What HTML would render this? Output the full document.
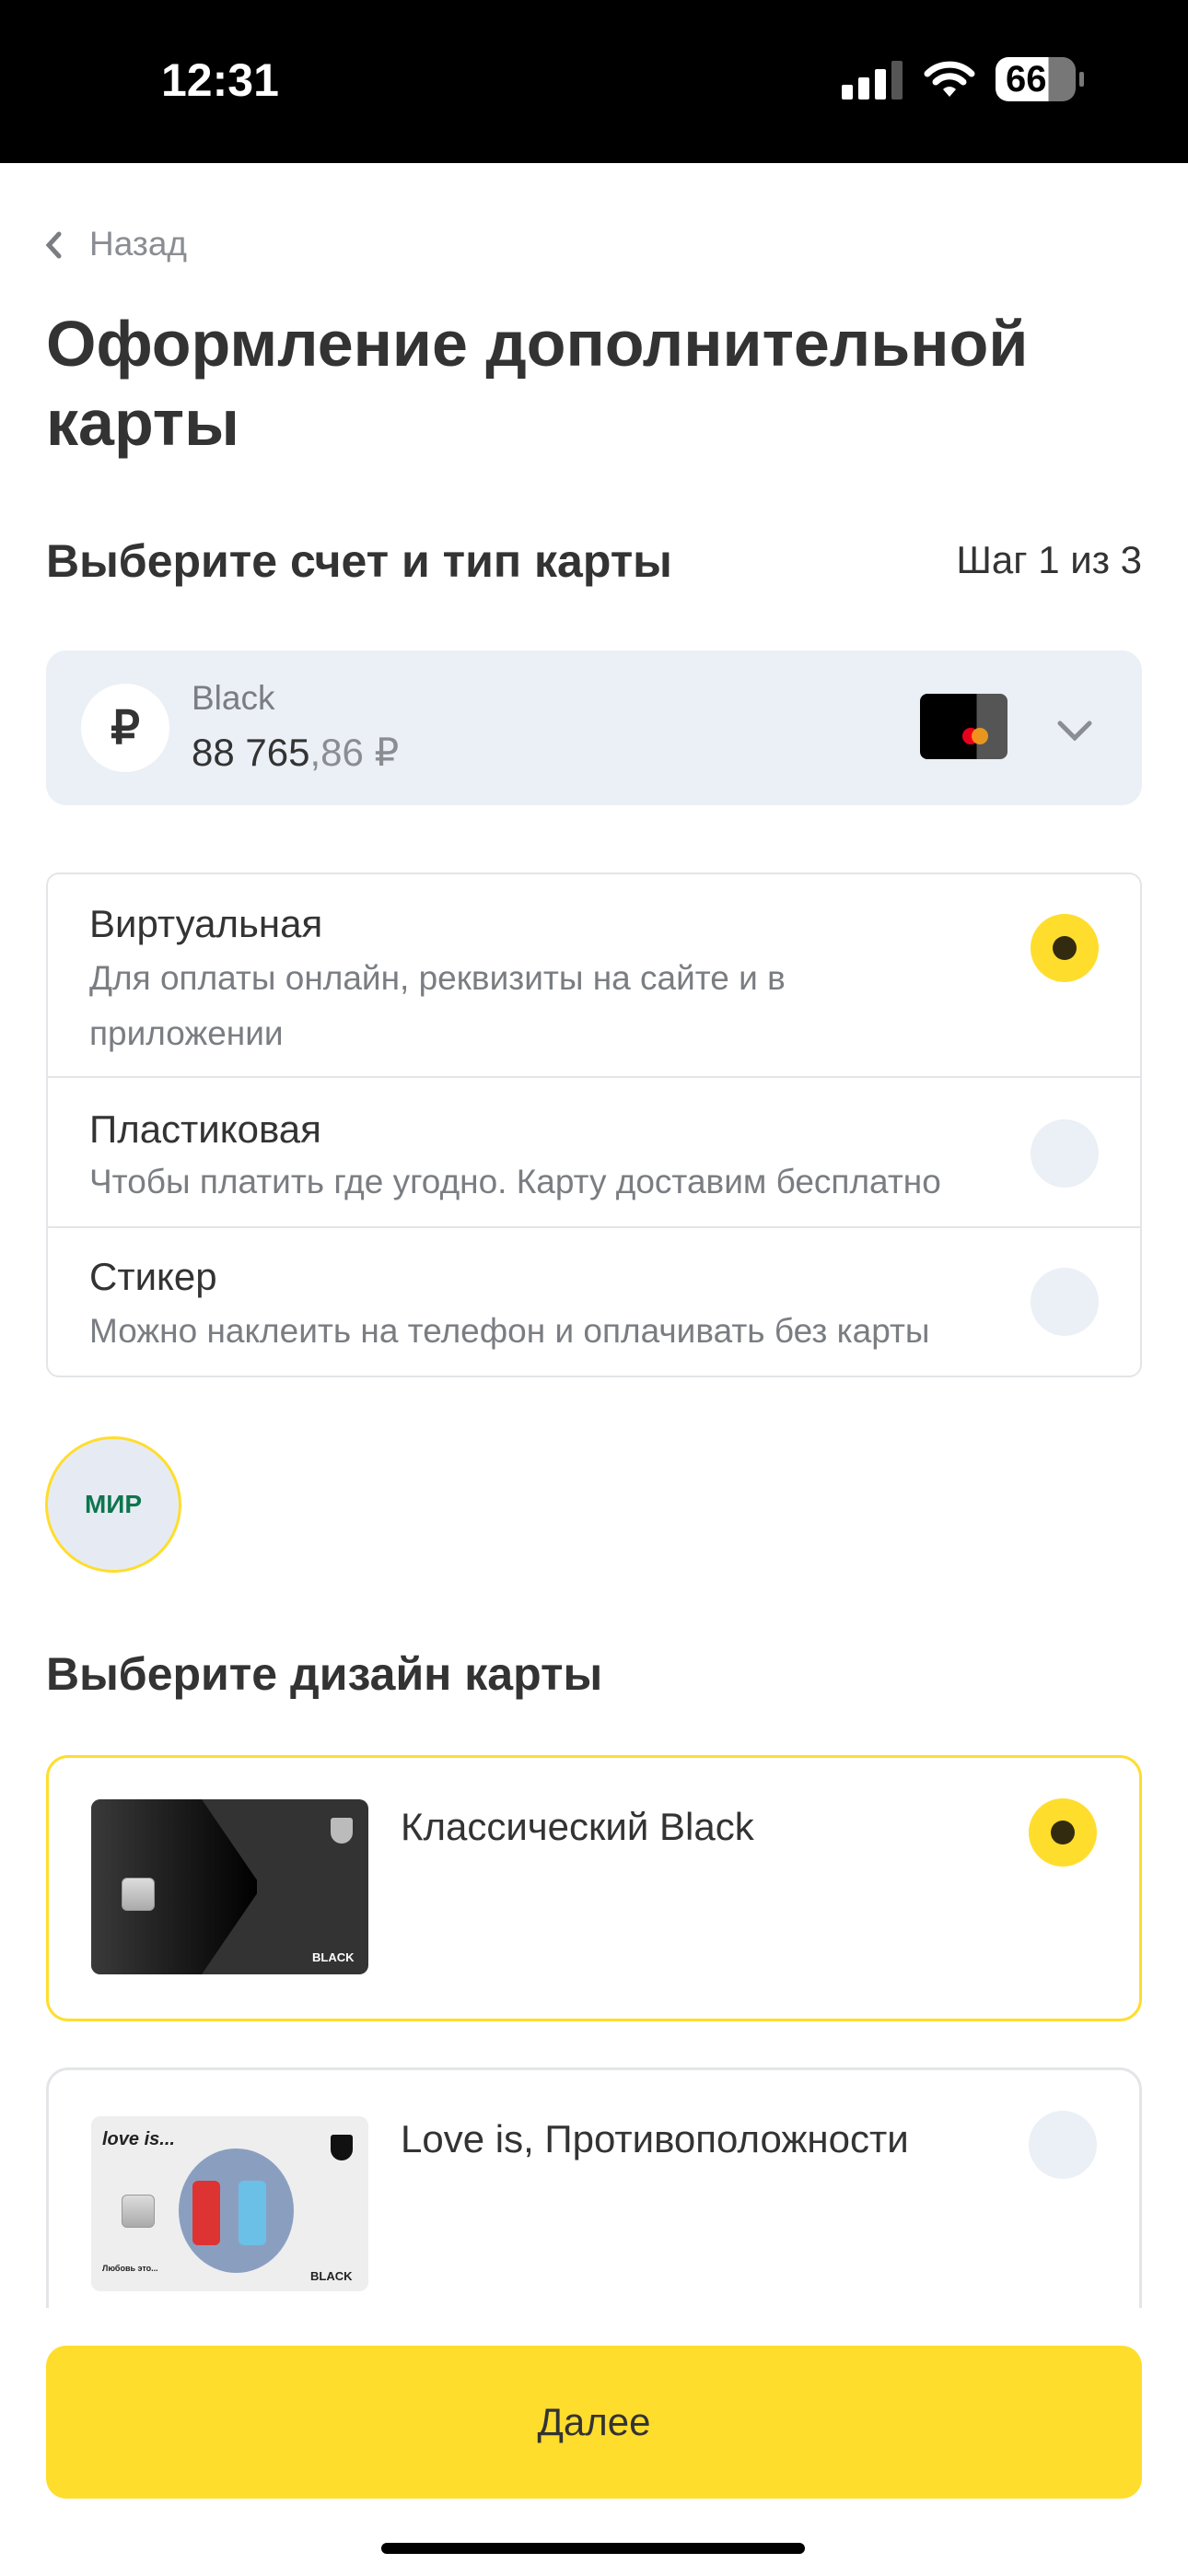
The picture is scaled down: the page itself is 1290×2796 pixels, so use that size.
<!DOCTYPE html>
<html><head><meta charset="utf-8"><style>
*{margin:0;padding:0;box-sizing:border-box}
body{width:1290px;height:2796px;background:#fff;font-family:"Liberation Sans",sans-serif;color:#333;position:relative;overflow:hidden}
.a{position:absolute}
.sb{left:0;top:0;width:1290px;height:177px;background:#000;color:#fff}
.t{white-space:nowrap}
.radio{width:74px;height:74px;border-radius:50%;background:#ebeff6}
.radio.on{background:#ffdd2d}
.radio.on:after{content:"";position:absolute;left:24px;top:24px;width:26px;height:26px;border-radius:50%;background:#332b10}
.ttl{font-size:42px;color:#333}
.sub{font-size:37px;color:#7a7d82}
.chip{width:36px;height:36px;border-radius:6px;background:linear-gradient(#ddd,#aaa);border:1px solid #999}
</style></head><body>
<div class="a sb">
 <div class="a t" style="left:175px;top:58px;font-size:50px;font-weight:bold">12:31</div>
 <div class="a" style="left:914px;top:92px;width:12px;height:16px;background:#fff;border-radius:2px"></div>
 <div class="a" style="left:932px;top:84px;width:12px;height:24px;background:#fff;border-radius:2px"></div>
 <div class="a" style="left:950px;top:75px;width:12px;height:33px;background:#fff;border-radius:2px"></div>
 <div class="a" style="left:968px;top:66px;width:12px;height:42px;background:#555;border-radius:2px"></div>
 <svg class="a" style="left:1003px;top:64px" width="56" height="44" viewBox="0 0 56 44"><path d="M4 16a34 34 0 0 1 48 0" stroke="#fff" stroke-width="7" fill="none" stroke-linecap="round"/><path d="M13 25a21 21 0 0 1 30 0" stroke="#fff" stroke-width="7" fill="none" stroke-linecap="round"/><path d="M21 33l7 8 7-8a10 10 0 0 0-14 0z" fill="#fff"/></svg>
 <div class="a" style="left:1081px;top:62px;width:87px;height:48px;border-radius:14px;background:linear-gradient(90deg,#fff 0,#fff 66%,#777 66%)"></div>
 <div class="a" style="left:1172px;top:78px;width:5px;height:16px;background:#777;border-radius:2px"></div>
 <div class="a t" style="left:1092px;top:64px;font-size:40px;font-weight:bold;color:#000">66</div>
</div>
<svg class="a" style="left:48px;top:250px" width="20" height="32"><path d="M16 4L5 16l11 12" stroke="#7a7d82" stroke-width="5" fill="none" stroke-linecap="round"/></svg>
<div class="a t" style="left:97px;top:244px;font-size:37px;color:#8a8d92">Назад</div>
<div class="a" style="left:50px;top:330px;font-size:70px;font-weight:bold;line-height:86px;color:#333">Оформление дополнительной<br>карты</div>
<div class="a t" style="left:50px;top:580px;font-size:50px;font-weight:bold">Выберите счет и тип карты</div>
<div class="a t" style="right:50px;top:584px;font-size:42px">Шаг 1 из 3</div>
<div class="a" style="left:50px;top:706px;width:1190px;height:168px;border-radius:22px;background:#ebeff6"></div>
<div class="a" style="left:88px;top:742px;width:96px;height:96px;border-radius:50%;background:#fff;text-align:center;line-height:96px;font-size:50px;font-weight:bold">₽</div>
<div class="a t" style="left:208px;top:737px;font-size:37px;color:#7a7d82">Black</div>
<div class="a t" style="left:208px;top:792px;font-size:42px;color:#333">88 765<span style="color:#8a8d92">,86 ₽</span></div>
<div class="a" style="left:999px;top:753px;width:95px;height:71px;border-radius:8px;background:linear-gradient(90deg,#000 65%,#555 65%)"></div>
<div class="a" style="left:1045px;top:790px;width:18px;height:18px;border-radius:50%;background:#eb001b"></div>
<div class="a" style="left:1055px;top:790px;width:18px;height:18px;border-radius:50%;background:#f79e1b;opacity:.9"></div>
<svg class="a" style="left:1148px;top:782px" width="38" height="22"><path d="M3 3l16 16 16-16" stroke="#8a8d92" stroke-width="5" fill="none" stroke-linecap="round"/></svg>
<div class="a" style="left:50px;top:947px;width:1190px;height:548px;border:2px solid #e3e5e8;border-radius:14px"></div>
<div class="a" style="left:52px;top:1168px;width:1186px;height:2px;background:#e3e5e8"></div>
<div class="a" style="left:52px;top:1331px;width:1186px;height:2px;background:#e3e5e8"></div>
<div class="a t ttl" style="left:97px;top:979px">Виртуальная</div>
<div class="a sub" style="left:97px;top:1032px;line-height:60px">Для оплаты онлайн, реквизиты на сайте и в<br>приложении</div>
<div class="a radio on" style="left:1119px;top:992px"></div>
<div class="a t ttl" style="left:97px;top:1202px">Пластиковая</div>
<div class="a t sub" style="left:97px;top:1262px">Чтобы платить где угодно. Карту доставим бесплатно</div>
<div class="a radio" style="left:1119px;top:1215px"></div>
<div class="a t ttl" style="left:97px;top:1362px">Стикер</div>
<div class="a t sub" style="left:97px;top:1424px">Можно наклеить на телефон и оплачивать без карты</div>
<div class="a radio" style="left:1119px;top:1376px"></div>
<div class="a" style="left:49px;top:1559px;width:148px;height:148px;border-radius:50%;background:#e6ebf3;border:3px solid #ffdd2d;text-align:center;line-height:142px;font-size:28px;font-weight:bold;color:#0f754e">МИР</div>
<div class="a t" style="left:50px;top:1788px;font-size:50px;font-weight:bold">Выберите дизайн карты</div>
<div class="a" style="left:50px;top:1905px;width:1190px;height:289px;border:3px solid #ffdd2d;border-radius:24px"></div>
<div class="a" style="left:99px;top:1953px;width:301px;height:190px;border-radius:10px;background:#333;overflow:hidden">
 <div class="a" style="left:0;top:0;width:180px;height:190px;background:linear-gradient(90deg,#3a3a3a,#000);clip-path:polygon(0 0,120px 0,185px 95px,120px 190px,0 190px)"></div>
 <div class="a chip" style="left:33px;top:85px"></div>
 <div class="a t" style="left:240px;top:164px;font-size:13px;font-weight:bold;color:#fff">BLACK</div>
 <div class="a" style="left:260px;top:20px;width:24px;height:28px;background:#bbb;border-radius:3px 3px 12px 12px"></div>
</div>
<div class="a t ttl" style="left:435px;top:1959px">Классический Black</div>
<div class="a radio on" style="left:1117px;top:1952px"></div>
<div class="a" style="left:50px;top:2244px;width:1190px;height:400px;border:3px solid #e3e5e8;border-radius:24px"></div>
<div class="a" style="left:99px;top:2297px;width:301px;height:190px;border-radius:10px;background:#eee;overflow:hidden">
 <div class="a t" style="left:12px;top:14px;font-size:20px;font-weight:bold;font-style:italic;color:#222">love is...</div>
 <div class="a chip" style="left:33px;top:85px"></div>
 <div class="a" style="left:95px;top:35px;width:125px;height:135px;border-radius:50%;background:#8a9fc0"></div>
 <div class="a" style="left:110px;top:70px;width:30px;height:70px;background:#d33;border-radius:6px"></div>
 <div class="a" style="left:160px;top:70px;width:30px;height:70px;background:#6bc0e8;border-radius:6px"></div>
 <div class="a t" style="left:12px;top:160px;font-size:9px;font-weight:bold;color:#222">Любовь это...</div>
 <div class="a t" style="left:238px;top:166px;font-size:13px;font-weight:bold;color:#222">BLACK</div>
 <div class="a" style="left:260px;top:20px;width:24px;height:28px;background:#111;border-radius:3px 3px 12px 12px"></div>
</div>
<div class="a t ttl" style="left:435px;top:2298px">Love is, Противоположности</div>
<div class="a radio" style="left:1117px;top:2291px"></div>
<div class="a" style="left:0;top:2505px;width:1290px;height:291px;background:#fff"></div>
<div class="a" style="left:50px;top:2546px;width:1190px;height:166px;border-radius:22px;background:#ffdd2d;text-align:center;line-height:166px;font-size:42px;color:#333">Далее</div>
<div class="a" style="left:414px;top:2760px;width:460px;height:12px;border-radius:6px;background:#000"></div>
</body></html>
